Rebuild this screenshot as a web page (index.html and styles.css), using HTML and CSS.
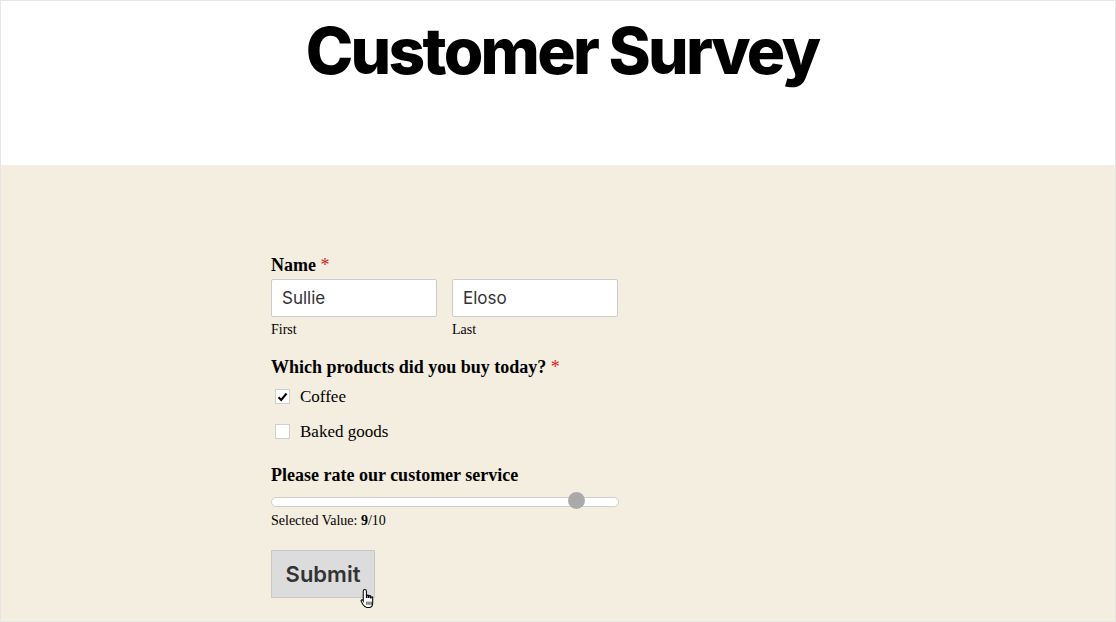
FILE: index.html
```html
<!DOCTYPE html>
<html lang="en">
<head>
  <meta charset="UTF-8">
  <title>Customer Survey</title>
  <link rel="stylesheet" href="styles.css">
</head>
<body>
  <div class="page">
    <header class="site-header">
      <h1>Customer Survey</h1>
    </header>

    <main class="content">
      <form class="survey">
        <div class="field">
          <div class="field-label">Name <span class="req">*</span></div>
          <div class="name-row">
            <div class="name-part">
              <input type="text" value="Sullie">
              <span class="sub">First</span>
            </div>
            <div class="name-part">
              <input type="text" value="Eloso">
              <span class="sub">Last</span>
            </div>
          </div>
        </div>

        <div class="field">
          <div class="field-label">Which products did you buy today? <span class="req">*</span></div>
          <div class="choices">
            <label class="choice"><span class="box checked">
              <svg width="11" height="10" viewBox="0 0 11 10"><path d="M1.5 5.2 L4.2 8 L9.5 1.5" fill="none" stroke="#000" stroke-width="2"/></svg>
            </span>Coffee</label>
            <label class="choice"><span class="box"></span>Baked goods</label>
          </div>
        </div>

        <div class="field">
          <div class="field-label">Please rate our customer service</div>
          <div class="slider">
            <div class="track"></div>
            <div class="thumb" style="left: 88%"></div>
          </div>
          <div class="selected">Selected Value: <b>9</b>/10</div>
        </div>

        <div class="submit-wrap">
          <button type="button" class="submit">Submit</button>
          <svg class="cursor" width="17" height="21" viewBox="0 0 16 20">
            <path d="M4.5 1.5 C5.5 1.5 6 2 6 3 L6 9 L6.5 9 L6.5 7.5 C6.5 6.5 8 6.5 8 7.5 L8 9 L8.5 9 L8.5 8 C8.5 7 10 7 10 8 L10 9.5 L10.5 9.5 L10.5 9 C10.5 8 12 8 12 9 L12 14 C12 16.5 11 18.5 8.5 18.5 L6.5 18.5 C4.5 18.5 3.5 17 2.5 15.5 L1 12.5 C0.5 11.5 1.8 10.8 2.5 11.7 L3 12.5 L3 3 C3 2 3.5 1.5 4.5 1.5 Z" fill="#fff" stroke="#000" stroke-width="1"/>
            <path d="M6.5 13 V16 M8.5 13 V16 M10.5 13 V16" stroke="#000" stroke-width="0.9"/>
          </svg>
        </div>
      </form>
    </main>
  </div>
</body>
</html>
```

FILE: styles.css
```css
body {
  margin: 0;
  background: #fff;
}

.page {
  height: 620px;
  border: 1px solid #e6e6e6;
  overflow: hidden;
  display: flex;
  flex-direction: column;
}

.site-header {
  height: 164px;
  background: #fff;
  text-align: center;
}

h1 {
  margin: 12px 0 0 8px;
  font-family: Inter, "Liberation Sans", sans-serif;
  font-weight: 800;
  font-size: 64px;
  letter-spacing: -0.042em;
  line-height: 76px;
  color: #000;
}

.content {
  flex: 1;
  background: #f4eee0;
}

.survey {
  width: 348px;
  margin: 0 0 0 270px;
  padding-top: 88px;
  font-family: "Liberation Serif", serif;
  color: #000;
}

.field {
  margin-bottom: 14px;
}

.field-label {
  font-size: 18px;
  font-weight: bold;
  line-height: 24px;
  margin-bottom: 2px;
}

.req {
  color: #e02020;
  font-weight: normal;
}

.name-row {
  display: flex;
  gap: 15px;
}

.name-part {
  display: flex;
  flex-direction: column;
}

.name-part input {
  width: 166px;
  height: 38px;
  box-sizing: border-box;
  border: 1px solid #ccc;
  border-radius: 2px;
  padding: 0 10px;
  font-family: Inter, "Liberation Sans", sans-serif;
  font-size: 17px;
  color: #333;
  background: #fff;
}

.sub {
  font-size: 14px;
  line-height: 22px;
  margin-top: 2px;
}

.choices {
  margin-top: -2px;
}

.choice {
  display: flex;
  align-items: center;
  gap: 10px;
  font-size: 17px;
  height: 35px;
  padding-left: 4px;
}

.box {
  width: 13px;
  height: 13px;
  border: 1px solid #cfcfcf;
  background: #fff;
  display: flex;
  align-items: center;
  justify-content: center;
}

.slider {
  position: relative;
  height: 20px;
  margin-top: 4px;
}

.track {
  position: absolute;
  left: 0;
  right: 0;
  top: 6px;
  height: 8px;
  border: 1px solid #cfcfcf;
  border-radius: 6px;
  background: #fff;
}

.thumb {
  position: absolute;
  top: 1px;
  width: 17px;
  height: 17px;
  margin-left: -9px;
  border-radius: 50%;
  background: #aaa;
}

.selected {
  font-size: 14px;
  line-height: 20px;
}

.submit-wrap {
  position: relative;
  margin-top: 19px;
}

.submit {
  width: 104px;
  height: 48px;
  background: #dcdcdc;
  border: 1px solid #c8c8c8;
  font-family: Inter, "Liberation Sans", sans-serif;
  font-weight: 600;
  font-size: 22px;
  color: #333;
}

.cursor {
  position: absolute;
  left: 89px;
  top: 38px;
}
```
